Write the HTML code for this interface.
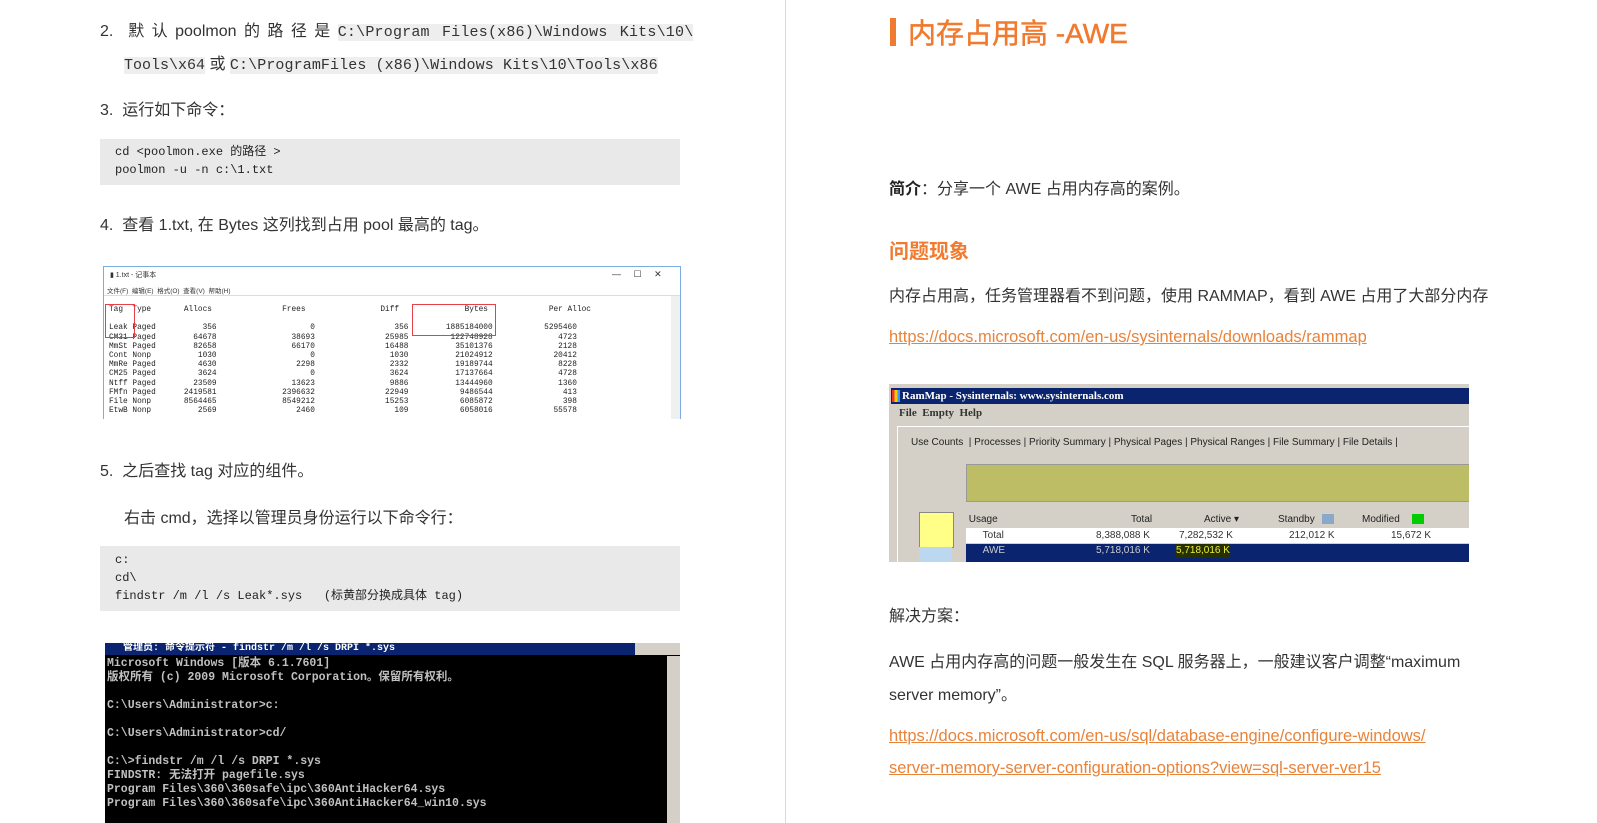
<!DOCTYPE html>
<html><head><meta charset="utf-8"><style>
body{margin:0;width:1597px;height:823px;background:#fff;position:relative;overflow:hidden;font-family:"Liberation Sans","Noto Sans CJK SC",sans-serif;color:#333;}
.a{position:absolute;white-space:nowrap;}
pre.a{white-space:pre;}
.t{font-size:16px;color:#333;}
.m{font-family:"Liberation Mono","Noto Sans CJK SC",monospace;}
.code{position:absolute;left:100px;width:580px;background:#e9e9ea;font-size:12px;line-height:18px;color:#222;}
.il{background:#eeeeee;font-family:"Liberation Mono","Noto Sans CJK SC",monospace;font-size:15px;}
.link{color:#e8833a;text-decoration:underline;font-size:16.5px;}
</style></head><body>
<div class="a" style="left:785px;top:0;width:1px;height:823px;background:#d8d8d8"></div>

<div class="a t" style="left:100px;top:17px;word-spacing:3px">2.&nbsp; 默 认 poolmon 的 路 径 是 <span class="il" style="letter-spacing:0.2px">C:\Program Files(x86)\Windows Kits\10\</span></div>
<div class="a t" style="left:124px;top:50px"><span class="il">Tools\x64</span> 或 <span class="il" style="letter-spacing:0.1px">C:\ProgramFiles (x86)\Windows Kits\10\Tools\x86</span></div>
<div class="a t" style="left:100px;top:96px">3.&nbsp; 运行如下命令：</div>
<div class="code m" style="top:139px;height:46px;padding:0 0 0 15px;width:565px"><div style="padding-top:4px">cd &lt;poolmon.exe 的路径 &gt;<br>poolmon -u -n c:\1.txt</div></div>
<div class="a t" style="left:100px;top:211px">4.&nbsp; 查看 1.txt, 在 Bytes 这列找到占用 pool 最高的 tag。</div>

<div class="a" style="left:103px;top:266px;width:576px;height:152px;border:1px solid #7aaee0;border-bottom:none;background:#fff;overflow:hidden;font-size:8px">
 <div class="a" style="left:6px;top:3px;font-size:7px">▮ 1.txt - 记事本</div>
 <div class="a" style="left:508px;top:2px;font-size:9px">—&nbsp;&nbsp;&nbsp;&nbsp;&nbsp;☐&nbsp;&nbsp;&nbsp;&nbsp;&nbsp;✕</div>
 <div class="a" style="left:3px;top:18px;font-size:6.5px">文件(F)&nbsp; 编辑(E)&nbsp; 格式(O)&nbsp; 查看(V)&nbsp; 帮助(H)</div>
 <div class="a" style="left:0;top:28px;width:576px;height:1px;background:#ddd"></div>
 <div class="a" style="right:0;top:29px;width:9px;height:124px;background:#f0f0f0"></div>
 <pre class="a" style="left:5px;top:39px;margin:0;font-family:'Liberation Mono',monospace;font-size:7.8px;line-height:9.2px;color:#222">Tag  Type       Allocs               Frees                Diff              Bytes             Per Alloc

Leak Paged          356                    0                 356        1885184000           5295460
CM31 Paged        64678                38693               25985         122748928              4723
MmSt Paged        82658                66170               16488          35101376              2128
Cont Nonp          1030                    0                1030          21024912             20412
MmRe Paged         4630                 2298                2332          19189744              8228
CM25 Paged         3624                    0                3624          17137664              4728
Ntff Paged        23509                13623                9886          13444960              1360
FMfn Paged      2419581              2396632               22949           9486544               413
File Nonp       8564465              8549212               15253           6085872               398
EtwB Nonp          2569                 2460                 109           6058016             55578</pre>
 <div class="a" style="left:1px;top:37px;width:28px;height:32px;border:1.5px solid #e8404a"></div>
 <div class="a" style="left:308px;top:37px;width:82px;height:30px;border:1.5px solid #e8404a"></div>
</div>

<div class="a t" style="left:100px;top:457px">5.&nbsp; 之后查找 tag 对应的组件。</div>
<div class="a t" style="left:124px;top:504px">右击 cmd，选择以管理员身份运行以下命令行：</div>
<div class="code m" style="top:546px;height:65px;padding:0 0 0 15px;width:565px"><div style="padding-top:5px">c:<br>cd\<br>findstr /m /l /s Leak*.sys&nbsp;&nbsp; (标黄部分换成具体 tag)</div></div>

<div class="a" style="left:105px;top:643px;width:575px;height:180px;background:#000;overflow:hidden">
 <div class="a" style="left:0;top:0;width:575px;height:12px;background:#0a2470;color:#fff;font-size:10px;line-height:12px;font-weight:bold;font-family:'Liberation Mono','Noto Sans CJK SC',monospace">&nbsp;&nbsp;&nbsp;管理员: 命令提示符 - findstr  /m /l /s DRPI *.sys</div>
 <div class="a" style="right:0;top:0;width:45px;height:12px;background:#d4d0c8"></div>
 <div class="a" style="right:0;top:13px;width:13px;height:167px;background:#d4d0c8"></div>
 <pre class="a" style="left:2px;top:14px;margin:0;color:#c0c0c0;font-family:'Liberation Mono','Noto Sans CJK SC',monospace;font-size:11.5px;line-height:14px;font-weight:bold">Microsoft Windows [版本 6.1.7601]
版权所有 (c) 2009 Microsoft Corporation。保留所有权利。

C:\Users\Administrator&gt;c:

C:\Users\Administrator&gt;cd/

C:\&gt;findstr /m /l /s DRPI *.sys
FINDSTR: 无法打开 pagefile.sys
Program Files\360\360safe\ipc\360AntiHacker64.sys
Program Files\360\360safe\ipc\360AntiHacker64_win10.sys</pre>
</div>

<div class="a" style="left:890px;top:18px;width:6px;height:28px;background:#f07a2f"></div>
<div class="a" style="left:908px;top:12px;font-size:28px;color:#f07a2f;-webkit-text-stroke:0.5px #f07a2f">内存占用高 -AWE</div>

<div class="a t" style="left:889px;top:175px"><b style="color:#222">简介</b>：分享一个 AWE 占用内存高的案例。</div>
<div class="a" style="left:889px;top:235px;font-size:20px;font-weight:bold;color:#f07a2f">问题现象</div>
<div class="a t" style="left:889px;top:282px">内存占用高，任务管理器看不到问题，使用 RAMMAP，看到 AWE 占用了大部分内存</div>
<div class="a link" style="left:889px;top:328px">https://docs.microsoft.com/en-us/sysinternals/downloads/rammap</div>

<div class="a" style="left:889px;top:384px;width:580px;height:178px;background:#d4d0c8;overflow:hidden;font-size:10px">
 <div class="a" style="left:2px;top:4px;width:578px;height:16px;background:#0a2470;color:#fff;font-family:'Liberation Serif',serif;font-weight:bold;font-size:11px;line-height:16px">&nbsp;&nbsp;&nbsp;&nbsp;RamMap - Sysinternals: www.sysinternals.com</div>
 <div class="a" style="left:3px;top:6px;width:8px;height:12px;background:linear-gradient(90deg,#e33 0 33%,#fc0 33% 66%,#39f 66%)"></div>
 <div class="a" style="left:10px;top:23px;font-family:'Liberation Serif',serif;font-weight:bold;font-size:11px">File&nbsp; Empty&nbsp; Help</div>
 <div class="a" style="left:8px;top:42px;width:572px;height:136px;border-left:1px solid #fff;border-top:1px solid #fff"></div>
 <div class="a" style="left:22px;top:53px;font-size:10px;color:#222">Use Counts &nbsp;| Processes | Priority Summary | Physical Pages | Physical Ranges | File Summary | File Details |</div>
 <div class="a" style="left:77px;top:80px;width:503px;height:36px;background:#bdbd66;border:1px solid #999"></div>
 <div class="a" style="left:30px;top:128px;width:33px;height:34px;background:#ffff88;border:1px solid #888"></div>
 <div class="a" style="left:30px;top:163px;width:33px;height:15px;background:#bbd8f0"></div>
 <div class="a" style="left:77px;top:128px;width:503px;height:15px;background:#d4d0c8;color:#222;line-height:15px">&nbsp;Usage<span style="position:absolute;left:165px">Total</span><span style="position:absolute;left:238px">Active ▾</span><span style="position:absolute;left:312px">Standby</span><span style="position:absolute;left:356px;width:12px;height:10px;top:2px;background:#8aa8c8"></span><span style="position:absolute;left:396px">Modified</span><span style="position:absolute;left:446px;width:12px;height:10px;top:2px;background:#0c0"></span></div>
 <div class="a" style="left:77px;top:144px;width:503px;height:15px;background:#fff;line-height:15px">&nbsp;&nbsp;&nbsp;&nbsp;&nbsp;&nbsp;Total<span style="position:absolute;left:130px">8,388,088 K</span><span style="position:absolute;left:213px">7,282,532 K</span><span style="position:absolute;left:323px">212,012 K</span><span style="position:absolute;left:425px">15,672 K</span></div>
 <div class="a" style="left:77px;top:160px;width:503px;height:18px;background:#0a2470;color:#ccc;line-height:14px">&nbsp;&nbsp;&nbsp;&nbsp;&nbsp;&nbsp;AWE<span style="position:absolute;left:130px">5,718,016 K</span><span style="position:absolute;left:210px;background:#263000;color:#ee4">5,718,016 K</span></div>
</div>

<div class="a t" style="left:889px;top:602px">解决方案：</div>
<div class="a t" style="left:889px;top:648px">AWE 占用内存高的问题一般发生在 SQL 服务器上，一般建议客户调整“maximum</div>
<div class="a t" style="left:889px;top:681px">server memory”。</div>
<div class="a link" style="left:889px;top:727px">https://docs.microsoft.com/en-us/sql/database-engine/configure-windows/</div>
<div class="a link" style="left:889px;top:759px">server-memory-server-configuration-options?view=sql-server-ver15</div>
</body></html>
